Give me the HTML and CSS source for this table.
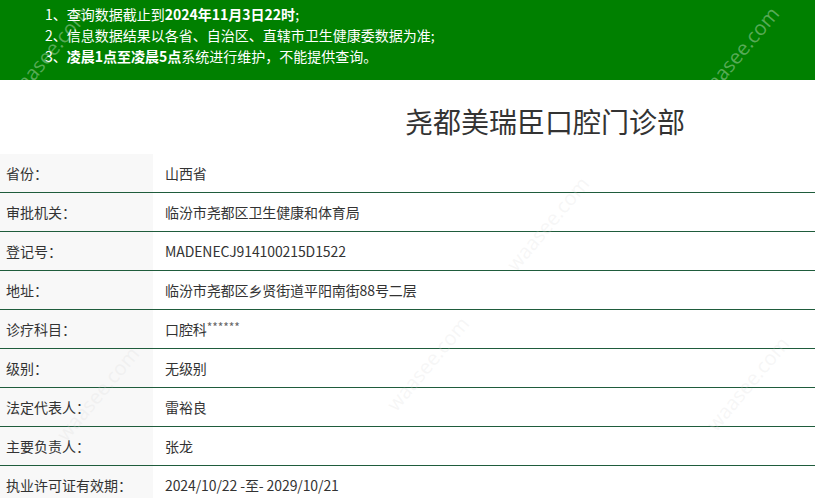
FILE: index.html
```html
<!DOCTYPE html>
<html lang="zh-CN">
<head>
<meta charset="utf-8">
<title>尧都美瑞臣口腔门诊部</title>
<link rel="stylesheet" href="styles.css">
</head>
<body>
<div class="page">
  <div class="notice">
    <p>1、查询数据截止到<b>2024年11月3日22时</b>;</p>
    <p>2、信息数据结果以各省、自治区、直辖市卫生健康委数据为准;</p>
    <p>3、<b>凌晨1点至凌晨5点</b>系统进行维护，不能提供查询。</p>
  </div>
  <h1 class="title">尧都美瑞臣口腔门诊部</h1>
  <div class="table">
    <div class="row"><div class="label">省份：</div><div class="value">山西省</div></div>
    <div class="row"><div class="label">审批机关：</div><div class="value">临汾市尧都区卫生健康和体育局</div></div>
    <div class="row"><div class="label">登记号：</div><div class="value">MADENECJ914100215D1522</div></div>
    <div class="row"><div class="label">地址：</div><div class="value">临汾市尧都区乡贤街道平阳南街88号二层</div></div>
    <div class="row"><div class="label">诊疗科目：</div><div class="value">口腔科<span class="stars">******</span></div></div>
    <div class="row"><div class="label">级别：</div><div class="value">无级别</div></div>
    <div class="row"><div class="label">法定代表人：</div><div class="value">雷裕良</div></div>
    <div class="row"><div class="label">主要负责人：</div><div class="value">张龙</div></div>
    <div class="row"><div class="label">执业许可证有效期：</div><div class="value">2024/10/22 -至- 2029/10/21</div></div>
  </div>
  <div class="wm wm1">waasee.com</div>
  <div class="wm wm2">waasee.com</div>
  <div class="wm wm3">waasee.com</div>
  <div class="wm wm4">waasee.com</div>
  <div class="wm wm5">waasee.com</div>
  <div class="wm wm6">waasee.com</div>
</div>
</body>
</html>
```
FILE: styles.css
```css
* { box-sizing: border-box; }
html, body { margin: 0; padding: 0; background: #fff; }
body {
  font-family: "Microsoft YaHei", "Noto Sans CJK SC", "Noto Sans", sans-serif;
  color: #333;
  overflow: hidden;
}
.page { position: relative; width: 815px; height: 498px; overflow: hidden; }
.notice {
  background: #008000;
  color: #fff;
  height: 80px;
  padding: 4px 0 0 45px;
  font-size: 14px;
  line-height: 21px;
}
.notice p { margin: 0; }
.notice b { font-weight: bold; }
.title {
  margin: 0;
  height: 74px;
  padding: 25px 0 0 405px;
  font-size: 28px;
  line-height: 32px;
  font-weight: normal;
  color: #333;
}
.table { display: flex; flex-direction: column; }
.row {
  display: flex;
  height: 39px;
  border-bottom: 1px solid #1f5c3c;
  font-size: 14px;
}
.label {
  width: 153px;
  background: #f8f8f8;
  padding-left: 6px;
  display: flex;
  align-items: center;
}
.value {
  flex: 1;
  padding-left: 12px;
  display: flex;
  align-items: center;
  letter-spacing: -0.1px;
}
.stars { font-size: 12px; position: relative; top: -3px; color: #666; }
.wm {
  position: absolute;
  font-family: "Open Sans", sans-serif;
  font-size: 20px;
  color: rgba(215, 215, 215, 0.22);
  transform: rotate(-50deg);
  white-space: nowrap;
  pointer-events: none;
}
.wm1 { left: -10px; top: 40px; color: rgba(255,255,255,0.35); }
.wm2 { left: 680px; top: 40px; color: rgba(255,255,255,0.35); }
.wm3 { left: 490px; top: 210px; }
.wm4 { left: 40px; top: 380px; }
.wm5 { left: 370px; top: 350px; }
.wm6 { left: 690px; top: 370px; }
```
